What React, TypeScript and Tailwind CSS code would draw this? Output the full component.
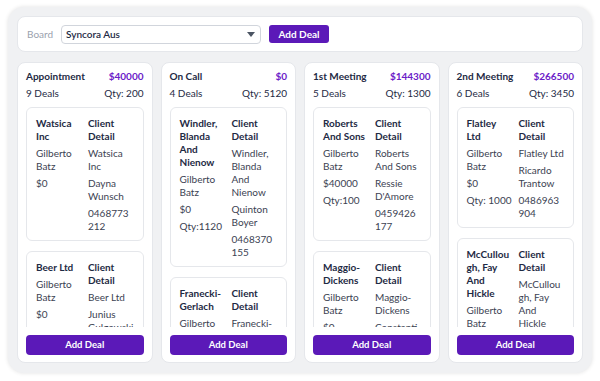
type Deal = {
  name: string;
  owner: string;
  amount: string;
  qty?: string;
  client: string[];
};

type Stage = {
  title: string;
  total: string;
  deals: string;
  qty: string;
  items: Deal[];
};

const stages: Stage[] = [
  {
    title: "Appointment",
    total: "$40000",
    deals: "9 Deals",
    qty: "Qty: 200",
    items: [
      { name: "Watsica Inc", owner: "Gilberto Batz", amount: "$0", client: ["Watsica Inc", "Dayna Wunsch", "0468773212"] },
      { name: "Beer Ltd", owner: "Gilberto Batz", amount: "$0", client: ["Beer Ltd", "Junius Gulgowski", "0412345678"] },
    ],
  },
  {
    title: "On Call",
    total: "$0",
    deals: "4 Deals",
    qty: "Qty: 5120",
    items: [
      {
        name: "Windler, Blanda And Nienow",
        owner: "Gilberto Batz",
        amount: "$0",
        qty: "Qty:1120",
        client: ["Windler, Blanda And Nienow", "Quinton Boyer", "0468370155"],
      },
      { name: "Franecki-Gerlach", owner: "Gilberto Batz", amount: "$0", client: ["Franecki-Gerlach", "Ona Kub", "0412345678"] },
    ],
  },
  {
    title: "1st Meeting",
    total: "$144300",
    deals: "5 Deals",
    qty: "Qty: 1300",
    items: [
      {
        name: "Roberts And Sons",
        owner: "Gilberto Batz",
        amount: "$40000",
        qty: "Qty:100",
        client: ["Roberts And Sons", "Ressie D'Amore", "0459426177"],
      },
      { name: "Maggio-Dickens", owner: "Gilberto Batz", amount: "$0", client: ["Maggio-Dickens", "Constantin", "0412345678"] },
    ],
  },
  {
    title: "2nd Meeting",
    total: "$266500",
    deals: "6 Deals",
    qty: "Qty: 3450",
    items: [
      {
        name: "Flatley Ltd",
        owner: "Gilberto Batz",
        amount: "$0",
        qty: "Qty: 1000",
        client: ["Flatley Ltd", "Ricardo Trantow", "0486963904"],
      },
      {
        name: "McCullough, Fay And Hickle",
        owner: "Gilberto Batz",
        amount: "$0",
        client: ["McCullough, Fay And Hickle", "Ricardo Trantow", "0412345678"],
      },
    ],
  },
];

function DealCard({ deal }: { deal: Deal }) {
  return (
    <div className="grid shrink-0 grid-cols-[44px_46px] gap-x-[8px] rounded-md border border-gray-200 bg-white px-[9px] pb-[7px] pt-[9px]">
      <div className="flex flex-col gap-[4px]">
        <div className="font-bold text-[#1e2a44] [overflow-wrap:anywhere]">{deal.name}</div>
        <div className="[overflow-wrap:anywhere]">{deal.owner}</div>
        <div>{deal.amount}</div>
        {deal.qty && <div className="whitespace-nowrap">{deal.qty}</div>}
      </div>
      <div className="flex flex-col gap-[4px]">
        <div className="font-bold text-[#1e2a44]">Client Detail</div>
        {deal.client.map((c) => (
          <div key={c} className="[overflow-wrap:anywhere]">
            {c}
          </div>
        ))}
      </div>
    </div>
  );
}

function Column({ stage }: { stage: Stage }) {
  return (
    <div className="flex h-[301px] flex-col rounded-lg border border-gray-200 bg-white px-[8px] pb-[7px] pt-[6px]">
      <div className="flex items-center justify-between leading-[14px]">
        <span className="font-bold text-[#1e2a44]">{stage.title}</span>
        <span className="font-bold text-[#6b21c8]">{stage.total}</span>
      </div>
      <div className="mt-[3px] flex items-center justify-between leading-[14px] text-[#1e2a44]">
        <span>{stage.deals}</span>
        <span>{stage.qty}</span>
      </div>
      <div className="mt-[7px] flex h-[220px] flex-col gap-[10px] overflow-hidden text-[#3b4252] leading-[13px]">
        {stage.items.map((d) => (
          <DealCard key={d.name} deal={d} />
        ))}
      </div>
      <button className="mt-auto h-[20px] w-full rounded-[4px] bg-[#5b19b8] text-[9.5px] font-bold text-white">
        Add Deal
      </button>
    </div>
  );
}

export default function App() {
  return (
    <div className="h-[381px] w-[600px] bg-white pl-[8px] pt-[7px] font-['Lato',sans-serif] text-[10px]">
      <div className="flex h-[366px] w-[584px] flex-col gap-[10px] rounded-[16px] bg-[#f0f1f3] px-[9px] pt-[9px] shadow-[0_0_4px_rgba(0,0,0,0.12)]">
        <div className="flex h-[36px] items-center rounded-lg border border-gray-200 bg-white px-[9px]">
          <span className="w-[34px] text-[#9aa1ad]">Board</span>
          <div className="flex h-[19px] w-[200px] items-center justify-between rounded-[4px] border border-gray-300 bg-white pl-[4px] pr-[5px]">
            <span className="font-semibold text-[#1e2a44]">Syncora Aus</span>
            <svg width="8" height="5" viewBox="0 0 8 5">
              <path d="M0 0h8L4 5z" fill="#4b5563" />
            </svg>
          </div>
          <button className="ml-[8px] h-[18px] w-[60px] rounded-[3px] bg-[#5b19b8] font-bold text-white">
            Add Deal
          </button>
        </div>
        <div className="grid grid-cols-4 gap-[8px]">
          {stages.map((s) => (
            <Column key={s.title} stage={s} />
          ))}
        </div>
      </div>
    </div>
  );
}
